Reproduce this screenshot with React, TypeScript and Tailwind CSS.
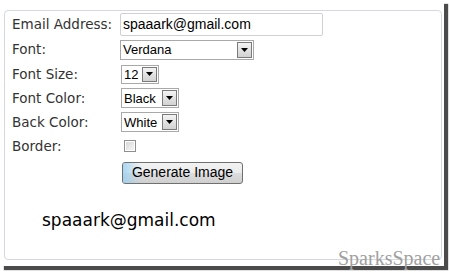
import React from 'react';

const labelCls = "w-[113px] shrink-0 pl-[7px] text-[13.5px] text-[#333] font-['DejaVu_Sans',sans-serif]";

const Arrow = () => (
    <div className="ml-auto mr-px flex h-[calc(100%-2px)] w-[15px] items-center justify-center border border-[#7a7a7a] bg-[linear-gradient(#f4f4f4,#e2e2e2_50%,#d2d2d2)]">
        <svg width="7" height="4" viewBox="0 0 7 4">
            <path d="M0 0h7L3.5 4z" fill="#000" />
        </svg>
    </div>
);

const Select = ({ value, w, h }: { value: string; w: string; h: string }) => (
    <div className={`flex items-center border border-[#a9a9a9] bg-white ${w} ${h}`}>
        <span className="pl-[2px] text-[13px] leading-none text-black font-['Liberation_Sans',Arial,sans-serif]">{value}</span>
        <Arrow />
    </div>
);

const Row = ({ label, h, children }: { label?: string; h: string; children: React.ReactNode }) => (
    <div className={`flex items-center ${h}`}>
        <div className={labelCls}>{label}</div>
        {children}
    </div>
);

export default function App() {
    return (
        <div className="h-[272px] w-[450px] bg-white">
            <div className="relative h-[266px] w-[444px] bg-white pl-[4px] pt-[10px] shadow-[4px_4px_1px_rgba(30,30,30,0.8)]">
                <div className="flex h-[250px] w-[438px] flex-col rounded-[4px] border border-[#d2d9e1] pt-px">
                    <Row label="Email Address:" h="h-[25px]">
                        <div className="ml-[2px] flex h-[23px] w-[203px] items-center rounded-[2px] border border-[#d0d0d0] pl-[2px] text-[14px] text-black font-['Liberation_Sans',Arial,sans-serif]">
                            spaaark@gmail.com
                        </div>
                    </Row>
                    <Row label="Font:" h="h-[25px]">
                        <div className="ml-[2px]"><Select value="Verdana" w="w-[134px]" h="h-[20px]" /></div>
                    </Row>
                    <Row label="Font Size:" h="h-[24px]">
                        <div className="ml-[3px]"><Select value="12" w="w-[38px]" h="h-[19px]" /></div>
                    </Row>
                    <Row label="Font Color:" h="h-[24px]">
                        <div className="ml-[3px]"><Select value="Black" w="w-[58px]" h="h-[20px]" /></div>
                    </Row>
                    <Row label="Back Color:" h="h-[24px]">
                        <div className="ml-[3px]"><Select value="White" w="w-[58px]" h="h-[20px]" /></div>
                    </Row>
                    <Row label="Border:" h="h-[24px]">
                        <div className="ml-[6px] h-[12px] w-[12px] border border-[#8f8f8f] bg-white p-px">
                            <div className="h-full w-full bg-[linear-gradient(135deg,#d8d8d8,#f6f6f6)]" />
                        </div>
                    </Row>
                    <Row h="h-[29px]">
                        <div className="relative ml-[4px] flex h-[22px] w-[121px] items-center justify-center overflow-hidden rounded-[3px] border border-[#707070] bg-[linear-gradient(#f2f2f2,#ebebeb_50%,#dddddd_50%,#cfcfcf)] text-[14px] text-black font-['Liberation_Sans',Arial,sans-serif]">
                            <div className="absolute inset-y-0 left-0 w-[18px] bg-[linear-gradient(to_right,rgba(150,210,245,0.8),rgba(150,210,245,0))]" />
                            <span className="relative">Generate Image</span>
                        </div>
                    </Row>
                    <div className="mt-[23px] pl-[37px] text-[17px] leading-[20px] text-black font-['DejaVu_Sans',sans-serif]">
                        spaaark@gmail.com
                    </div>
                </div>
                <div className="absolute left-[338px] top-[246px] text-[20px] leading-[24px] text-[#a0a0a0] font-['Liberation_Serif',serif]">
                    SparksSpace
                </div>
            </div>
        </div>
    );
}
